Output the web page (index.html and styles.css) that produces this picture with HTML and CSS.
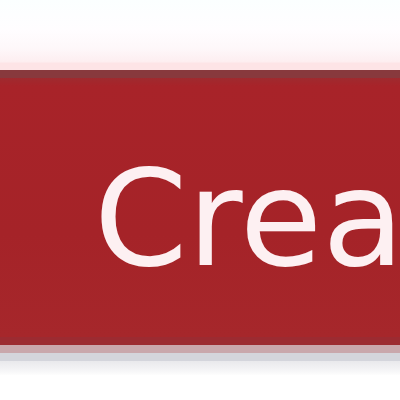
FILE: index.html
```html
<!DOCTYPE html>
<html lang="en">
<head>
    <meta charset="UTF-8">
    <meta name="viewport" content="width=device-width, initial-scale=1.0">
    <title>Create</title>
    <link rel="stylesheet" href="styles.css">
</head>
<body>
    <div class="page">
        <div class="top-glow"></div>
        <button class="create-btn">Create</button>
        <div class="btn-shadow"></div>
    </div>
</body>
</html>
```

FILE: styles.css
```css
body {
    margin: 0;
    background-color: #fff;
    overflow: hidden;
}
.page {
    width: 400px;
    height: 400px;
    display: flex;
    flex-direction: column;
    overflow: hidden;
}
.top-glow {
    height: 70px;
    flex-shrink: 0;
    background: linear-gradient(to bottom, #fbffff 0px, #fffdff 30px, #fef8fa 48px, #fdeef0 62px, #fde4e6 63px, #fde4e6 70px);
}
.create-btn {
    box-sizing: border-box;
    height: 275px;
    flex-shrink: 0;
    width: 100%;
    margin: 0;
    padding: 23px 0 0 94px;
    border: none;
    border-top: 8px solid #88393d;
    border-bottom: 8px solid #9c2b31;
    background: linear-gradient(to bottom, #9f2a2f 0px, #a82329 8px, #a52328 60%, #a6272b 100%);
    color: #fdf0f2;
    font-family: "DejaVu Sans", sans-serif;
    font-size: 134px;
    line-height: 134px;
    text-align: left;
    white-space: nowrap;
    overflow: hidden;
    vertical-align: top;
}
.btn-shadow {
    height: 30px;
    flex-shrink: 0;
    background: linear-gradient(to bottom, #c9a7ac 0px, #c9a7ac 8px, #d4d5dc 8px, #d4d5dc 16px, #e9e9ec 16px, #f3f3f5 24px, #fdfdfd 30px);
}
```
